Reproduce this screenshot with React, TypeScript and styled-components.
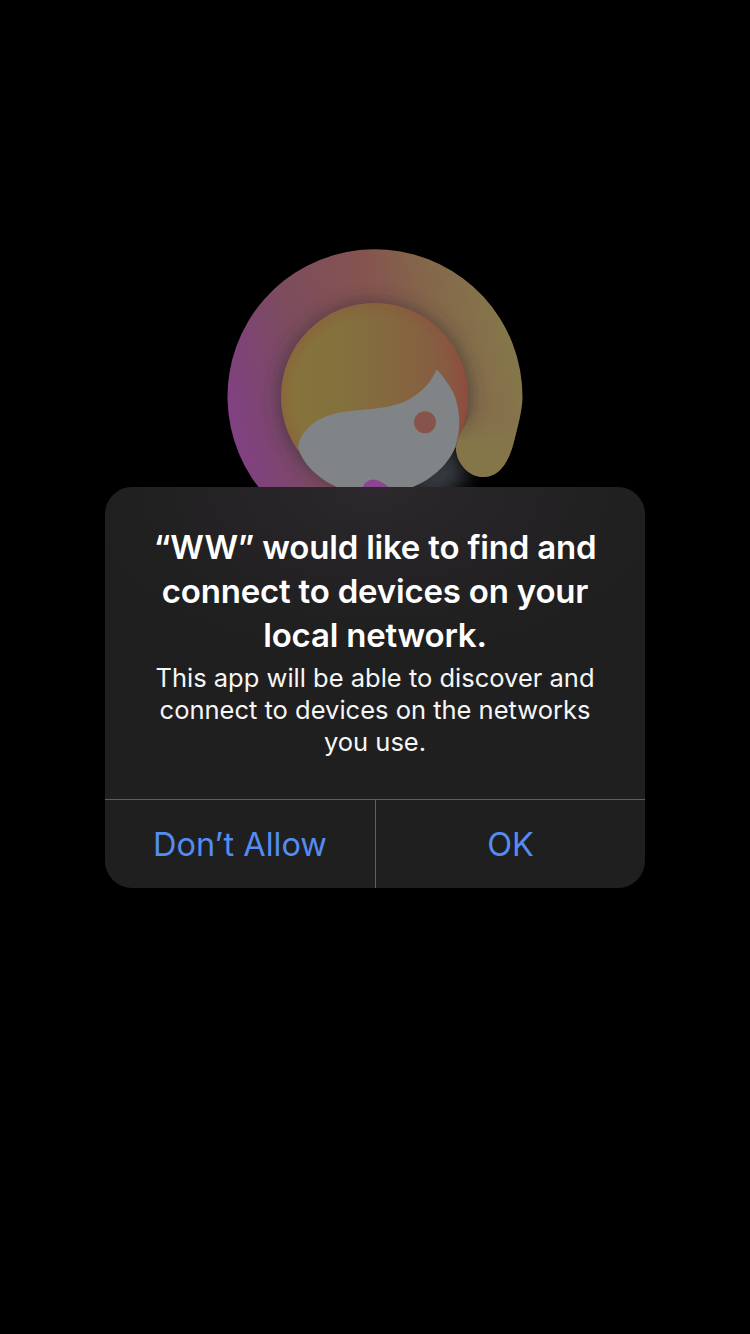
import React from 'react';
import styled, { createGlobalStyle } from 'styled-components';

const GlobalStyle = createGlobalStyle`
  html, body {
    margin: 0;
    padding: 0;
    background: #000;
  }
`;

const Screen = styled.div`
  width: 750px;
  height: 1334px;
  background: #000;
  display: flex;
  flex-direction: column;
  align-items: center;
  padding-top: 248px;
  box-sizing: border-box;
  overflow: hidden;
  font-family: Inter, "Liberation Sans", sans-serif;
`;

const Logo = styled.svg`
  display: block;
  width: 300px;
  height: 300px;
  margin-bottom: -61px;
`;

const Alert = styled.div`
  position: relative;
  width: 540px;
  height: 401px;
  border-radius: 27px;
  overflow: hidden;
  display: flex;
  flex-direction: column;
  background: radial-gradient(ellipse 300px 170px at 50% 0, #2c282d 0%, #242224 55%, #1f1f1f 100%);
`;

const Message = styled.div`
  flex: 1;
  padding: 38px 30px 0;
  text-align: center;
  color: #fff;
`;

const Title = styled.h1`
  margin: 0;
  font-size: 33px;
  line-height: 44px;
  font-weight: 600;
  letter-spacing: -0.2px;
`;

const Body = styled.p`
  margin: 5px 0 0;
  font-size: 25.5px;
  line-height: 32px;
  font-weight: 400;
  color: #f6f6f6;
`;

const Actions = styled.div`
  display: grid;
  grid-template-columns: 271px 1fr;
  height: 89px;
  border-top: 1px solid #5f5f5f;
  box-sizing: border-box;
`;

const ActionButton = styled.button<{ $divided?: boolean }>`
  border: 0;
  padding: 0;
  background: transparent;
  font-family: inherit;
  font-size: 32.5px;
  font-weight: 400;
  color: #548cf0;
  border-right: ${(props) => (props.$divided ? '1px solid #5f5f5f' : '0')};
`;

const AppLogo: React.FC = () => (
  <Logo viewBox="225 248 300 300" aria-hidden="true">
    <defs>
      <linearGradient id="ring" gradientUnits="userSpaceOnUse" x1="228" y1="470" x2="522" y2="400">
        <stop offset="0" stopColor="#844088" />
        <stop offset="0.12" stopColor="#7e4378" />
        <stop offset="0.3" stopColor="#7c4c5f" />
        <stop offset="0.6" stopColor="#85544f" />
        <stop offset="0.8" stopColor="#84684a" />
        <stop offset="1" stopColor="#85764a" />
      </linearGradient>
      <linearGradient id="cap" gradientUnits="userSpaceOnUse" x1="480" y1="408" x2="480" y2="442">
        <stop offset="0" stopColor="#85744a" stopOpacity="0" />
        <stop offset="1" stopColor="#85764a" stopOpacity="1" />
      </linearGradient>
      <linearGradient id="head" gradientUnits="userSpaceOnUse" x1="281" y1="400" x2="468" y2="400">
        <stop offset="0" stopColor="#86753a" />
        <stop offset="0.35" stopColor="#83703e" />
        <stop offset="0.7" stopColor="#856340" />
        <stop offset="0.9" stopColor="#875a42" />
        <stop offset="1" stopColor="#8f4c40" />
      </linearGradient>
      <radialGradient id="rim" gradientUnits="userSpaceOnUse" cx="374.5" cy="396.5" r="93.5">
        <stop offset="0.85" stopColor="#91483a" stopOpacity="0" />
        <stop offset="1" stopColor="#91483a" stopOpacity="0.3" />
      </radialGradient>
      <filter id="soft" x="-30%" y="-30%" width="160%" height="160%">
        <feGaussianBlur stdDeviation="9" />
      </filter>
    </defs>
    <path
      d="M522.5 397 A147.5 147.5 0 1 0 340 540 L360 470 L440 440 L456 448 C456 462 468 477 483 477 C500 477 508 462 513 445 C518 425 522.5 410 522.5 397 Z"
      fill="url(#ring)"
    />
    <circle cx="374.5" cy="398" r="96" fill="#2a2a2e" opacity="0.55" filter="url(#soft)" />
    <path d="M395 490 L456 440 C455 458 462 470 472 475 L440 500 Z" fill="#36373c" filter="url(#soft)" />
    <circle cx="374.5" cy="396.5" r="93.5" fill="url(#head)" />
    <circle cx="374.5" cy="396.5" r="93.5" fill="url(#rim)" />
    <path
      d="M436.7 369.3 C431 382 423 392 408 400 C392 408 372 409 350 411 C325 413 302 425 298 447 C303 467 325 484 345 490 L405 490 C430 482 448 465 455 448 C461 430 461 410 453 392 C448 383 442 375 436.7 369.3 Z"
      fill="#808486"
    />
    <circle cx="425" cy="422.3" r="11" fill="#87534a" />
    <path d="M362 489 C364 483 368 479.5 373 479.5 C379 479.5 385 484 391 489 Z" fill="#8c4691" />
    <path
      d="M456 448 C456 462 468 477 483 477 C500 477 508 462 513 445 C518 425 522.5 410 522.5 397 L478 397 C470 420 458 432 456 448 Z"
      fill="url(#cap)"
    />
  </Logo>
);

const App: React.FC = () => (
  <Screen>
    <GlobalStyle />
    <AppLogo />
    <Alert>
      <Message>
        <Title>“WW” would like to find and connect to devices on your local network.</Title>
        <Body>This app will be able to discover and connect to devices on the networks you use.</Body>
      </Message>
      <Actions>
        <ActionButton $divided>Don’t Allow</ActionButton>
        <ActionButton>OK</ActionButton>
      </Actions>
    </Alert>
  </Screen>
);

export default App;
